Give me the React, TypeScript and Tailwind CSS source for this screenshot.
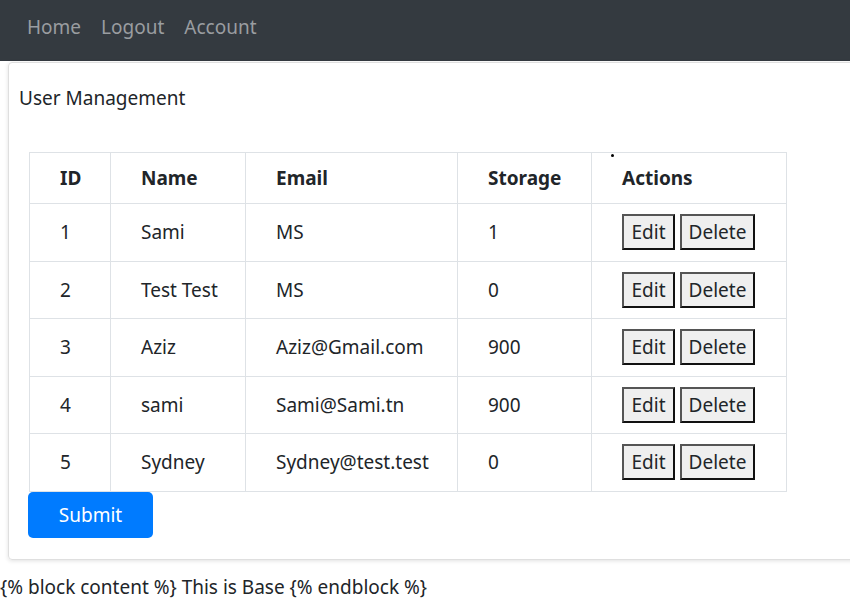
import React from 'react';

const users = [
  { id: 1, name: 'Sami', email: 'MS', storage: '1' },
  { id: 2, name: 'Test Test', email: 'MS', storage: '0' },
  { id: 3, name: 'Aziz', email: 'Aziz@Gmail.com', storage: '900' },
  { id: 4, name: 'sami', email: 'Sami@Sami.tn', storage: '900' },
  { id: 5, name: 'Sydney', email: 'Sydney@test.test', storage: '0' },
];

const cell = 'border border-[#dee2e6] px-[30px] align-middle whitespace-nowrap';
const btn =
  'h-[36px] bg-[#efefef] border-2 border-[#111] border-t-[#555] border-l-[#555] leading-[30px] text-center';

export default function App() {
  return (
    <div
      className="w-[850px] h-[603px] overflow-hidden bg-white text-[#212529] text-[19px] leading-[30px]"
      style={{ fontFamily: '"Noto Sans", "Open Sans", sans-serif' }}
    >
      {/* navbar */}
      <nav className="h-[61px] bg-[#343a40] flex items-start pt-[12px] px-[17px]">
        {['Home', 'Logout', 'Account'].map((l) => (
          <a key={l} href="#" className="px-[10px] text-[#9a9da0]">
            {l}
          </a>
        ))}
      </nav>

      {/* card */}
      <div className="relative ml-[8px] w-[860px] mt-[1px] border border-[#dfdfdf] rounded-[4px] shadow-[0_1px_4px_rgba(0,0,0,0.12)] pt-[20px] pb-[21px] pl-[10px]">
        <div>User Management</div>
        <span className="absolute left-[602px] top-[91px] w-[3px] h-[3px] rounded-full bg-black" />

        <table className="mt-[39px] ml-[10px] border-collapse table-fixed w-[757px]">
          <colgroup>
            <col className="w-[81px]" />
            <col className="w-[135px]" />
            <col className="w-[212px]" />
            <col className="w-[134px]" />
            <col className="w-[195px]" />
          </colgroup>
          <thead>
            <tr className="h-[51px]">
              <th className={`${cell} text-left font-bold`}>ID</th>
              <th className={`${cell} text-left font-bold`}>Name</th>
              <th className={`${cell} text-left font-bold`}>Email</th>
              <th className={`${cell} text-left font-bold`}>Storage</th>
              <th className={`${cell} text-left font-bold`}>Actions</th>
            </tr>
          </thead>
          <tbody>
            {users.map((u) => (
              <tr key={u.id} className="h-[57.5px]">
                <td className={cell}>{u.id}</td>
                <td className={cell}>{u.name}</td>
                <td className={cell}>{u.email}</td>
                <td className={cell}>{u.storage}</td>
                <td className={cell}>
                  <div className="flex gap-[5px]">
                    <button className={`${btn} w-[53px]`}>Edit</button>
                    <button className={`${btn} w-[75px]`}>Delete</button>
                  </div>
                </td>
              </tr>
            ))}
          </tbody>
        </table>

        <button className="ml-[9px] w-[125px] h-[46px] bg-[#007bff] text-white rounded-[5px]">
          Submit
        </button>
      </div>

      <div className="mt-[12px]">{'{% block content %} This is Base {% endblock %}'}</div>
    </div>
  );
}
